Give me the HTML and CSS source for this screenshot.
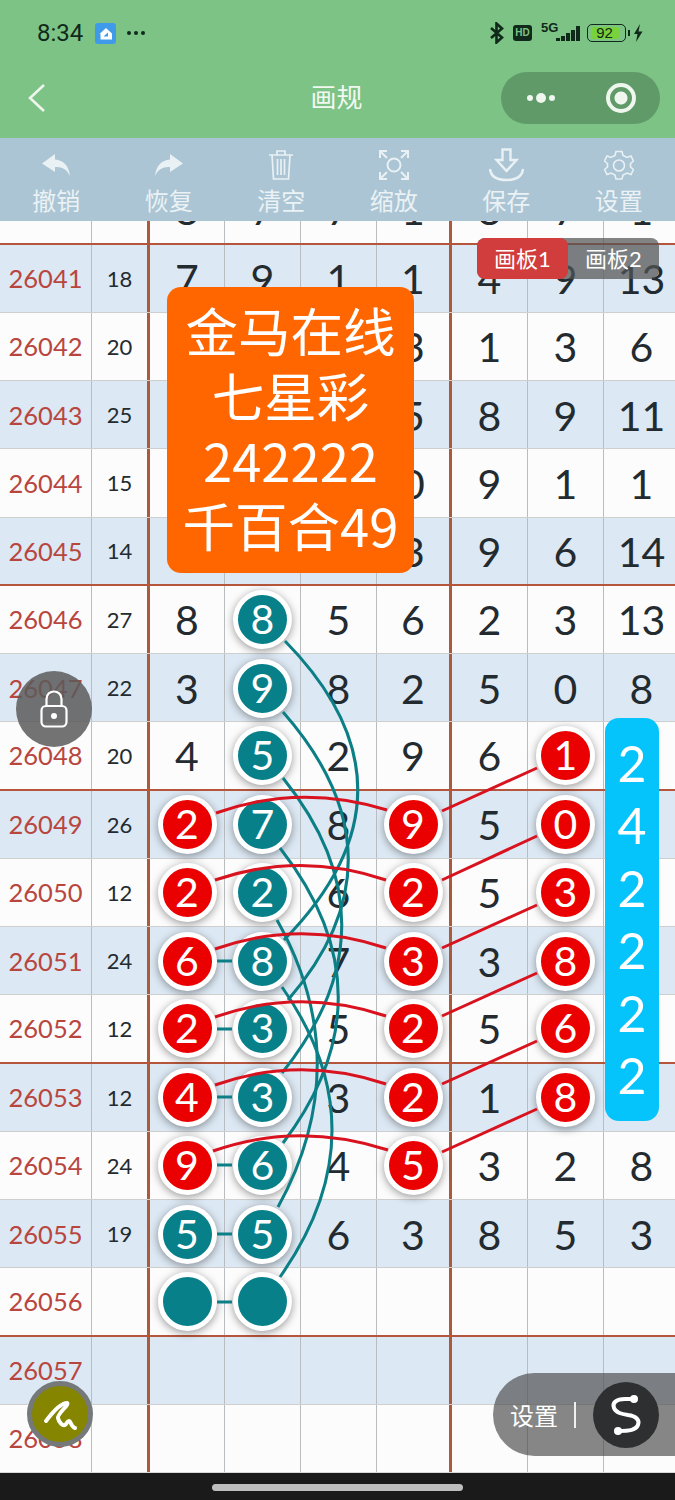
FILE: index.html
```html
<!DOCTYPE html>
<html lang="zh-CN">
<head>
    <meta charset="UTF-8">
    <meta name="viewport" content="width=device-width, initial-scale=1.0">
    <title>画规</title>
    <link rel="stylesheet" href="styles.css">
</head>
<body>
<div class="app">

    <header class="top">
        <div class="status">
            <div class="status-left">
                <span class="time">8:34</span>
                <svg class="app-icon" width="21" height="21" viewBox="0 0 21 21">
                    <rect width="21" height="21" rx="3" fill="#3f9bea"/>
                    <path d="M4.500 11 L11 5 L17 10.500 V16.500 H5.500 V11 Z" fill="#fff"/>
                    <path d="M9 13 L13 9.500 V13.500 H9 Z" fill="#3f9bea"/>
                </svg>
                <span class="status-dots"><i></i><i></i><i></i></span>
            </div>
            <div class="status-right">
                <svg width="14" height="22" viewBox="0 0 14 22">
                    <path d="M1 6 L12 15.500 L6.500 20.500 V1.500 L12 6.500 L1 16" fill="none" stroke="#10291a" stroke-width="2.600"/>
                </svg>
                <span class="hd">HD</span>
                <span class="net">5G</span>
                <span class="signal"><i class="s0"></i><i class="s1"></i><i class="s2"></i><i class="s3"></i><i class="s4"></i></span>
                <span class="battery"><span class="battery-fill">92</span></span>
                <i class="battery-nub"></i>
                <svg width="10" height="18" viewBox="0 0 10 18">
                    <path d="M7 0 L1 10 H4.500 L3 18 L9.500 7.500 H5.500 Z" fill="#10291a"/>
                </svg>
            </div>
        </div>
        <div class="nav">
            <svg class="back" width="18" height="28" viewBox="0 0 18 28">
                <path d="M16 1 L2 14 L16 27" fill="none" stroke="#eef6ee" stroke-width="2.600"/>
            </svg>
            <h1 class="title">画规</h1>
            <div class="capsule">
                <span class="capsule-dots"><i></i><b></b><i></i></span>
                <span class="capsule-target"></span>
            </div>
        </div>
    </header>

    <nav class="tools">
        <div class="tool">
            <svg width="30" height="24" viewBox="0 0 30 24"><path d="M14 1 L1 10.500 L14 19 V14 C21 13.500 26 16.500 29 23 C28 13 22.500 7 14 6.500 Z" fill="#e9f1f4"/></svg>
            <span>撤销</span>
        </div>
        <div class="tool">
            <svg width="30" height="24" viewBox="0 0 30 24"><path d="M16 1 L29 10.500 L16 19 V14 C9 13.500 4 16.500 1 23 C2 13 7.500 7 16 6.500 Z" fill="#e9f1f4"/></svg>
            <span>恢复</span>
        </div>
        <div class="tool">
            <svg width="30" height="32" viewBox="0 0 30 32" fill="none" stroke="#e9f1f4" stroke-width="1.700">
                <path d="M3 6 H27 M11 6 V2 H19 V6 M6 6 L7.500 30 H22.500 L24 6 M11.500 10 V26 M15 10 V26 M18.500 10 V26"/>
            </svg>
            <span>清空</span>
        </div>
        <div class="tool">
            <svg width="30" height="30" viewBox="0 0 30 30" fill="none" stroke="#e9f1f4" stroke-width="2">
                <circle cx="15" cy="15" r="6.500"/>
                <path d="M1 8 V1 H8 M22 1 H29 V8 M29 22 V29 H22 M8 29 H1 V22 M2 2 L8 8 M28 2 L22 8 M28 28 L22 22 M2 28 L8 22"/>
            </svg>
            <span>缩放</span>
        </div>
        <div class="tool">
            <svg width="38" height="34" viewBox="0 0 38 34" fill="none" stroke="#e9f1f4" stroke-width="2.400">
                <path d="M15.500 1.500 H23.500 V12 H29.500 L19.500 23 L9.500 12 H15.500 Z"/>
                <path d="M3 21 C4 30 12 32 19.500 32 C27 32 35 30 36 21"/>
            </svg>
            <span>保存</span>
        </div>
        <div class="tool">
            <svg width="30" height="30" viewBox="0 0 30 30" fill="none" stroke="#e9f1f4" stroke-width="1.600">
                <path d="M12 1.500 H18 L19 5.500 L23 7.500 L27 6 L29.500 11 L26.500 13.500 V17 L29.500 19.500 L27 24.500 L23 23 L19 25 L18 29 H12 L11 25 L7 23 L3 24.500 L0.500 19.500 L3.500 17 V13.500 L0.500 11 L3 6 L7 7.500 L11 5.500 Z"/>
                <circle cx="15" cy="15.500" r="5.500"/>
            </svg>
            <span>设置</span>
        </div>
    </nav>

    <main class="board">
        <div class="sheet">
            <div class="row line"><span class="issue"></span><span class="sum"></span><span class="cell">8</span><span class="cell">7</span><span class="cell">7</span><span class="cell edge">1</span><span class="cell">8</span><span class="cell">7</span><span class="cell">1</span></div>
            <div class="row blue"><span class="issue">26041</span><span class="sum">18</span><span class="cell">7</span><span class="cell">9</span><span class="cell">1</span><span class="cell edge">1</span><span class="cell">4</span><span class="cell">9</span><span class="cell">13</span></div>
            <div class="row"><span class="issue">26042</span><span class="sum">20</span><span class="cell"></span><span class="cell"></span><span class="cell"></span><span class="cell edge">3</span><span class="cell">1</span><span class="cell">3</span><span class="cell">6</span></div>
            <div class="row blue"><span class="issue">26043</span><span class="sum">25</span><span class="cell"></span><span class="cell"></span><span class="cell"></span><span class="cell edge">5</span><span class="cell">8</span><span class="cell">9</span><span class="cell">11</span></div>
            <div class="row"><span class="issue">26044</span><span class="sum">15</span><span class="cell"></span><span class="cell"></span><span class="cell"></span><span class="cell edge">0</span><span class="cell">9</span><span class="cell">1</span><span class="cell">1</span></div>
            <div class="row blue line"><span class="issue">26045</span><span class="sum">14</span><span class="cell"></span><span class="cell"></span><span class="cell"></span><span class="cell edge">3</span><span class="cell">9</span><span class="cell">6</span><span class="cell">14</span></div>
            <div class="row"><span class="issue">26046</span><span class="sum">27</span><span class="cell">8</span><span class="cell"><b class="ball teal">8</b></span><span class="cell">5</span><span class="cell edge">6</span><span class="cell">2</span><span class="cell">3</span><span class="cell">13</span></div>
            <div class="row blue"><span class="issue">26047</span><span class="sum">22</span><span class="cell">3</span><span class="cell"><b class="ball teal">9</b></span><span class="cell">8</span><span class="cell edge">2</span><span class="cell">5</span><span class="cell">0</span><span class="cell">8</span></div>
            <div class="row line"><span class="issue">26048</span><span class="sum">20</span><span class="cell">4</span><span class="cell"><b class="ball teal">5</b></span><span class="cell">2</span><span class="cell edge">9</span><span class="cell">6</span><span class="cell"><b class="ball red">1</b></span><span class="cell"></span></div>
            <div class="row blue"><span class="issue">26049</span><span class="sum">26</span><span class="cell"><b class="ball red">2</b></span><span class="cell"><b class="ball teal">7</b></span><span class="cell">8</span><span class="cell edge"><b class="ball red">9</b></span><span class="cell">5</span><span class="cell"><b class="ball red">0</b></span><span class="cell"></span></div>
            <div class="row"><span class="issue">26050</span><span class="sum">12</span><span class="cell"><b class="ball red">2</b></span><span class="cell"><b class="ball teal">2</b></span><span class="cell">6</span><span class="cell edge"><b class="ball red">2</b></span><span class="cell">5</span><span class="cell"><b class="ball red">3</b></span><span class="cell"></span></div>
            <div class="row blue"><span class="issue">26051</span><span class="sum">24</span><span class="cell"><b class="ball red">6</b></span><span class="cell"><b class="ball teal">8</b></span><span class="cell">7</span><span class="cell edge"><b class="ball red">3</b></span><span class="cell">3</span><span class="cell"><b class="ball red">8</b></span><span class="cell"></span></div>
            <div class="row line"><span class="issue">26052</span><span class="sum">12</span><span class="cell"><b class="ball red">2</b></span><span class="cell"><b class="ball teal">3</b></span><span class="cell">5</span><span class="cell edge"><b class="ball red">2</b></span><span class="cell">5</span><span class="cell"><b class="ball red">6</b></span><span class="cell"></span></div>
            <div class="row blue"><span class="issue">26053</span><span class="sum">12</span><span class="cell"><b class="ball red">4</b></span><span class="cell"><b class="ball teal">3</b></span><span class="cell">3</span><span class="cell edge"><b class="ball red">2</b></span><span class="cell">1</span><span class="cell"><b class="ball red">8</b></span><span class="cell"></span></div>
            <div class="row"><span class="issue">26054</span><span class="sum">24</span><span class="cell"><b class="ball red">9</b></span><span class="cell"><b class="ball teal">6</b></span><span class="cell">4</span><span class="cell edge"><b class="ball red">5</b></span><span class="cell">3</span><span class="cell">2</span><span class="cell">8</span></div>
            <div class="row blue"><span class="issue">26055</span><span class="sum">19</span><span class="cell"><b class="ball teal">5</b></span><span class="cell"><b class="ball teal">5</b></span><span class="cell">6</span><span class="cell edge">3</span><span class="cell">8</span><span class="cell">5</span><span class="cell">3</span></div>
            <div class="row line"><span class="issue">26056</span><span class="sum"></span><span class="cell"><b class="ball teal"></b></span><span class="cell"><b class="ball teal"></b></span><span class="cell"></span><span class="cell edge"></span><span class="cell"></span><span class="cell"></span><span class="cell"></span></div>
            <div class="row blue"><span class="issue">26057</span><span class="sum"></span><span class="cell"></span><span class="cell"></span><span class="cell"></span><span class="cell edge"></span><span class="cell"></span><span class="cell"></span><span class="cell"></span></div>
            <div class="row"><span class="issue">26058</span><span class="sum"></span><span class="cell"></span><span class="cell"></span><span class="cell"></span><span class="cell edge"></span><span class="cell"></span><span class="cell"></span><span class="cell"></span></div>
        </div>

        <!-- connecting lines, viewBox uses page coordinates -->
        <svg class="links" width="675" height="1251" viewBox="0 221 675 1251" fill="none" stroke-width="3">
            <g stroke="#0b7f85">
                <path d="M285 641 Q431 790 284 940"/>
                <path d="M283 712 Q411 858 288 1000"/>
                <path d="M283 778 Q401 925 282 1073"/>
                <path d="M280 848 Q395 995 283 1143"/>
                <path d="M277 920 Q357 1063 278 1207"/>
                <path d="M282 987 Q383 1131 280 1277"/>
                <path d="M217 961 H232 M217 1029 H232 M217 1097 H232 M217 1165 H232 M217 1234 H232 M217 1302 H232"/>
            </g>
            <g stroke="#d8131f">
                <path d="M216 813 Q300 783 387 810"/>
                <path d="M215 880 Q300 851 386 880"/>
                <path d="M215 949 Q300 919 386 948"/>
                <path d="M215 1017 Q300 987 386 1016"/>
                <path d="M215 1085 Q300 1055 386 1084"/>
                <path d="M213 1151 Q298 1121 388 1150"/>
                <path d="M442 811 L537 768"/>
                <path d="M442 880 L537 836"/>
                <path d="M442 948 L537 905"/>
                <path d="M442 1016 L537 973"/>
                <path d="M442 1084 L537 1041"/>
                <path d="M442 1152 L537 1109"/>
            </g>
        </svg>

        <div class="tabs">
            <span class="tab tab-on">画板1</span>
            <span class="tab">画板2</span>
        </div>

        <div class="poster">
            <div>金马在线</div>
            <div>七星彩</div>
            <div>242222</div>
            <div>千百合49</div>
        </div>

        <div class="picks">
            <span>2</span><span>4</span><span>2</span><span>2</span><span>2</span><span>2</span>
        </div>

        <div class="lock">
            <svg width="32" height="38" viewBox="0 0 32 38" fill="none" stroke="#fff" stroke-width="2.200">
                <rect x="3.500" y="16" width="25" height="20.500" rx="4.500"/>
                <path d="M8.500 16 V9 C8.500 -1 23.500 -1 23.500 9 V16"/>
                <circle cx="16" cy="26" r="3" fill="#fff" stroke="none"/>
            </svg>
        </div>

        <div class="pen">
            <svg width="38" height="34" viewBox="0 0 38 34" fill="none" stroke="#fff" stroke-width="4" stroke-linecap="round" stroke-linejoin="round">
                <path d="M5 24 C11 16 20 6 26 6 C29 7 16 17 17 21 C18 26 22 29 24 28 C26 27 26 24 28 24 C30 24 30 30 34 31"/>
            </svg>
        </div>

        <div class="float-set">
            <span class="float-label">设置</span>
            <i class="float-bar"></i>
            <span class="float-btn">
                <svg width="40" height="44" viewBox="0 0 40 44" fill="none" stroke="#fff" stroke-width="4" stroke-linecap="round">
                    <path d="M27 6 H19 C10 6 6 10 8 15 C10 20 16 21 22 22 C30 23 34 27 32 32 C30 37 24 38 12 38"/>
                    <circle cx="28" cy="6" r="4" fill="#fff" stroke="none"/>
                    <circle cx="12" cy="38" r="4" fill="#fff" stroke="none"/>
                </svg>
            </span>
        </div>
    </main>

    <footer class="home-bar"><i></i></footer>
</div>
</body>
</html>
```

FILE: styles.css
```css
* {
    box-sizing: border-box;
}
body {
    margin: 0;
    font-family: Lato, "Noto Sans CJK SC", sans-serif;
    background: #1a1a1a;
}
i, b {
    font-style: normal;
    font-weight: 400;
}
.app {
    width: 675px;
    height: 1500px;
    display: flex;
    flex-direction: column;
    overflow: hidden;
}

/* green header */
.top {
    height: 138px;
    background: #7dc385;
    padding: 0 15px 0 28px;
}
.status {
    height: 66px;
    padding: 0 17px 0 9px;
    display: flex;
    justify-content: space-between;
    align-items: center;
    color: #10291a;
}
.status-left, .status-right {
    display: flex;
    align-items: center;
}
.time {
    font-family: Roboto, sans-serif;
    font-size: 24px;
    margin-right: 12px;
}
.status-dots {
    display: flex;
    gap: 3px;
    margin-left: 11px;
}
.status-dots i {
    width: 4px;
    height: 4px;
    border-radius: 50%;
    background: #10291a;
}
.hd {
    width: 19px;
    height: 16px;
    border-radius: 3px;
    background: #10291a;
    color: #7dc385;
    font: 700 10px/16px "Liberation Sans", sans-serif;
    text-align: center;
    margin: 0 9px;
}
.net {
    width: 15px;
    font: 700 13px/1 "Liberation Sans", sans-serif;
    margin-top: -11px;
}
.signal {
    display: flex;
    align-items: flex-end;
    gap: 1.500px;
    width: 24px;
    height: 15px;
    margin-top: 1px;
    margin-right: 7px;
}
.signal i {
    width: 3.500px;
    background: #10291a;
}
.signal .s0 { height: 3px; }
.signal .s1 { height: 5px; }
.signal .s2 { height: 8px; }
.signal .s3 { height: 11px; }
.signal .s4 { height: 15px; }
.battery {
    width: 39px;
    height: 18px;
    border: 1.500px solid #10291a;
    border-radius: 5px;
    padding: 1.500px;
}
.battery-fill {
    display: block;
    width: 28px;
    height: 12px;
    background: #79d13c;
    border-radius: 2px;
    font: 400 15px/12px "Liberation Sans", sans-serif;
    text-align: center;
    margin-left: 1px;
}
.battery-nub {
    width: 2px;
    height: 6px;
    background: #10291a;
    margin: 0 3px 0 2px;
}
.nav {
    height: 64px;
    display: flex;
    align-items: center;
    justify-content: space-between;
    position: relative;
}
.title {
    position: absolute;
    left: 0;
    right: 15px;
    margin: 0 0 5px;
    text-align: center;
    color: #f1f8f1;
    font-size: 26px;
    font-weight: 400;
}
.capsule {
    width: 159px;
    height: 52px;
    border-radius: 26px;
    background: #5f9a68;
    display: flex;
    align-items: center;
    justify-content: space-between;
    padding: 0 24px 0 26px;
}
.capsule-dots {
    display: flex;
    align-items: center;
    gap: 3px;
}
.capsule-dots i {
    width: 6px;
    height: 6px;
    border-radius: 50%;
    background: #eef6ee;
}
.capsule-dots b {
    width: 10px;
    height: 10px;
    border-radius: 50%;
    background: #eef6ee;
}
.capsule-target {
    width: 30px;
    height: 30px;
    border-radius: 50%;
    border: 4px solid #eef6ee;
    background: radial-gradient(circle, #eef6ee 0 6px, transparent 7px);
}

/* tool strip */
.tools {
    height: 83px;
    background: #abc5d4;
    display: grid;
    grid-template-columns: repeat(6, 1fr);
}
.tool {
    position: relative;
    color: #eaf2f5;
    text-align: center;
    font-size: 24px;
    line-height: 28px;
}
.tool svg {
    position: absolute;
    left: 50%;
    top: 27px;
    transform: translate(-50%, -50%);
}
.tool span {
    position: absolute;
    left: 0;
    right: 0;
    top: 49px;
}

/* number sheet */
.board {
    flex: none;
    height: 1251px;
    position: relative;
    overflow: hidden;
    background: #fcfcfc;
}
.sheet {
    margin-top: -44.750px;
    width: 751px;
}
.row {
    height: 68.250px;
    display: grid;
    grid-template-columns: 92px 58px 75px 76px 76px 75px 76px 76px 76px;
    border-bottom: 1.500px solid #cfcfcf;
    background: #fcfcfc;
    color: #232b30;
}
.row.blue {
    background: #dce8f3;
}
.row.line {
    border-bottom: 2.500px solid #b5553c;
}
.row span {
    display: flex;
    align-items: center;
    justify-content: center;
    border-right: 1.500px solid #b9bdc0;
}
.issue {
    color: #b8463f;
    font-size: 25.500px;
}
.sum {
    font-size: 22px;
    border-right: 3px solid #ab5a3c !important;
}
.cell {
    font-size: 41px;
    padding-top: 1px;
}
.cell.edge {
    border-right: 3px solid #ab5a3c;
}
.ball {
    position: relative;
    flex: none;
    width: 59px;
    height: 59px;
    border-radius: 50%;
    border: 5.500px solid #fff;
    box-shadow: 0 2px 8px rgba(0, 0, 0, 0.4);
    color: #fff;
    font-size: 41px;
    line-height: 47px;
    text-align: center;
}
.ball.red {
    background: #ea0000;
}
.ball.teal {
    background: #07808a;
}
.links {
    position: absolute;
    left: 0;
    top: 0;
}

/* things lying over the sheet */
.tabs {
    position: absolute;
    left: 477px;
    top: 17px;
    display: flex;
    width: 182px;
    height: 41px;
    border-radius: 8px;
    background: rgba(85, 85, 85, 0.72);
}
.tab {
    flex: 1;
    color: #fff;
    font-size: 22px;
    line-height: 41px;
    text-align: center;
}
.tab-on {
    background: #d13c3c;
    border-radius: 8px;
}
.poster {
    position: absolute;
    left: 167px;
    top: 66px;
    width: 247px;
    height: 286px;
    background: #ff6600;
    border-radius: 14px;
    color: #fff;
    font-family: "Noto Sans CJK SC", sans-serif;
    font-size: 52.500px;
    line-height: 65px;
    text-align: center;
    padding-top: 10px;
}
.picks {
    position: absolute;
    left: 605px;
    top: 497px;
    width: 54px;
    height: 403px;
    background: #05c3fb;
    border-radius: 14px;
    padding-top: 14px;
    display: flex;
    flex-direction: column;
    align-items: center;
    color: #fff;
    font-size: 50px;
    line-height: 62.400px;
}
.lock {
    position: absolute;
    left: 16px;
    top: 450px;
    width: 76px;
    height: 76px;
    border-radius: 50%;
    background: rgba(90, 90, 90, 0.85);
    display: flex;
    align-items: center;
    justify-content: center;
}
.pen {
    position: absolute;
    left: 27px;
    top: 1160px;
    width: 66px;
    height: 66px;
    border-radius: 50%;
    background: #858500;
    border: 5px solid #75797a;
    display: flex;
    align-items: center;
    justify-content: center;
}
.float-set {
    position: absolute;
    left: 493px;
    top: 1152px;
    width: 182px;
    height: 83px;
    border-radius: 42px 0 0 42px;
    background: rgba(70, 70, 70, 0.65);
    display: flex;
    align-items: center;
    color: #fff;
    padding-left: 17px;
}
.float-label {
    font-size: 24px;
}
.float-bar {
    width: 2px;
    height: 26px;
    background: #f0f0f0;
    margin-left: 16px;
}
.float-btn {
    width: 66px;
    height: 66px;
    border-radius: 50%;
    background: #2d2f30;
    margin-left: 17px;
    display: flex;
    align-items: center;
    justify-content: center;
}

/* phone bar */
.home-bar {
    flex: 1;
    background: #1a1a1a;
    border-top: 1.500px solid #d8d8d8;
    display: flex;
    justify-content: center;
    padding-top: 11px;
}
.home-bar i {
    width: 251px;
    height: 7px;
    border-radius: 4px;
    background: #bdbdbd;
}
```
